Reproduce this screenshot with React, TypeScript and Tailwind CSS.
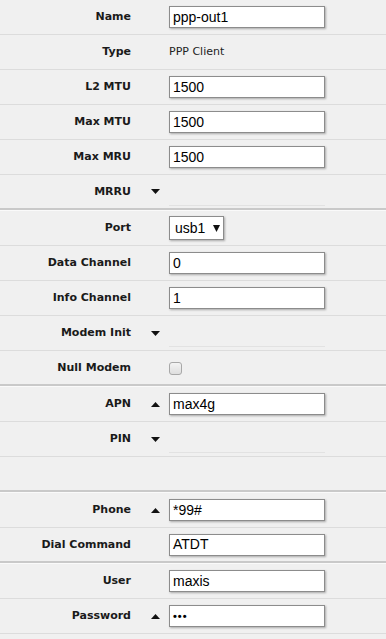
import React from "react";

type Field =
  | { kind: "input"; label: string; value: string; arrow?: "up" | "down"; password?: boolean }
  | { kind: "text"; label: string; value: string }
  | { kind: "collapsed"; label: string }
  | { kind: "select"; label: string; value: string }
  | { kind: "check"; label: string }
  | { kind: "blank" };

const sections: Field[][] = [
  [
    { kind: "input", label: "Name", value: "ppp-out1" },
    { kind: "text", label: "Type", value: "PPP Client" },
    { kind: "input", label: "L2 MTU", value: "1500" },
    { kind: "input", label: "Max MTU", value: "1500" },
    { kind: "input", label: "Max MRU", value: "1500" },
    { kind: "collapsed", label: "MRRU" },
  ],
  [
    { kind: "select", label: "Port", value: "usb1" },
    { kind: "input", label: "Data Channel", value: "0" },
    { kind: "input", label: "Info Channel", value: "1" },
    { kind: "collapsed", label: "Modem Init" },
    { kind: "check", label: "Null Modem" },
  ],
  [
    { kind: "input", label: "APN", value: "max4g", arrow: "up" },
    { kind: "collapsed", label: "PIN" },
    { kind: "blank" },
  ],
  [
    { kind: "input", label: "Phone", value: "*99#", arrow: "up" },
    { kind: "input", label: "Dial Command", value: "ATDT" },
  ],
  [
    { kind: "input", label: "User", value: "maxis" },
    { kind: "input", label: "Password", value: "•••", arrow: "up", password: true },
  ],
];

function Arrow({ dir }: { dir: "up" | "down" }) {
  return (
    <svg width="9" height="5" viewBox="0 0 9 5" className="block">
      {dir === "down" ? (
        <polygon points="0,0 9,0 4.5,5" fill="#111" />
      ) : (
        <polygon points="0,5 9,5 4.5,0" fill="#111" />
      )}
    </svg>
  );
}

function Row({ f, last }: { f: Field; last: boolean }) {
  const border = last ? "border-b-2 border-b-[#c9c9c9]" : "border-b border-b-[#dcdcdc]";
  if (f.kind === "blank") {
    return <div className={`h-[35px] ${border}`} />;
  }
  const arrow = f.kind === "collapsed" ? "down" : f.kind === "input" ? f.arrow : undefined;
  return (
    <div className={`flex h-[35px] items-center ${border}`}>
      <div className="w-[131px] pt-[1px] text-right font-['DejaVu_Sans',sans-serif] text-[11px] font-bold text-[#1a1a1a]">
        {f.label}
      </div>
      <div className="flex w-[38px] justify-center pl-[10px]">{arrow && <Arrow dir={arrow} />}</div>
      {f.kind === "input" && (
        <div className="flex h-[22px] w-[156px] items-center border border-[#8c8c8c] bg-white pl-[3px] font-['Liberation_Sans',sans-serif] text-[14px] text-black shadow-[1px_1px_2px_rgba(0,0,0,0.3)]">
          {f.password ? <span className="text-[11px] font-bold tracking-[1px]">{f.value}</span> : f.value}
        </div>
      )}
      {f.kind === "text" && (
        <div className="pt-[1px] font-['DejaVu_Sans',sans-serif] text-[11px] text-[#222]">{f.value}</div>
      )}
      {f.kind === "collapsed" && <div className="mt-[30px] h-px w-[156px] self-start bg-[#e2e2e2]" />}
      {f.kind === "select" && (
        <div className="flex h-[24px] w-[55px] items-center gap-[8px] border border-[#8c8c8c] bg-white pl-[5px] font-['Liberation_Sans',sans-serif] text-[14px] text-black shadow-[1px_1px_2px_rgba(0,0,0,0.3)]">
          {f.value}
          <svg width="7" height="7" viewBox="0 0 7 7">
            <polygon points="0,0 7,0 3.5,7" fill="#111" />
          </svg>
        </div>
      )}
      {f.kind === "check" && (
        <div className="mt-[2px] h-[13px] w-[13px] rounded-[3px] border border-[#a8a8a8] bg-gradient-to-b from-[#f4f4f4] to-[#dedede]" />
      )}
    </div>
  );
}

export default function App() {
  return (
    <div className="h-[639px] w-[386px] overflow-hidden bg-[#f0f0f0]">
      {sections.map((sec, i) => (
        <div key={i} className={i > 0 ? "border-t border-t-[#fafafa]" : ""}>
          {sec.map((f, j) => (
            <Row key={j} f={f} last={j === sec.length - 1 && i < sections.length - 1} />
          ))}
        </div>
      ))}
    </div>
  );
}
